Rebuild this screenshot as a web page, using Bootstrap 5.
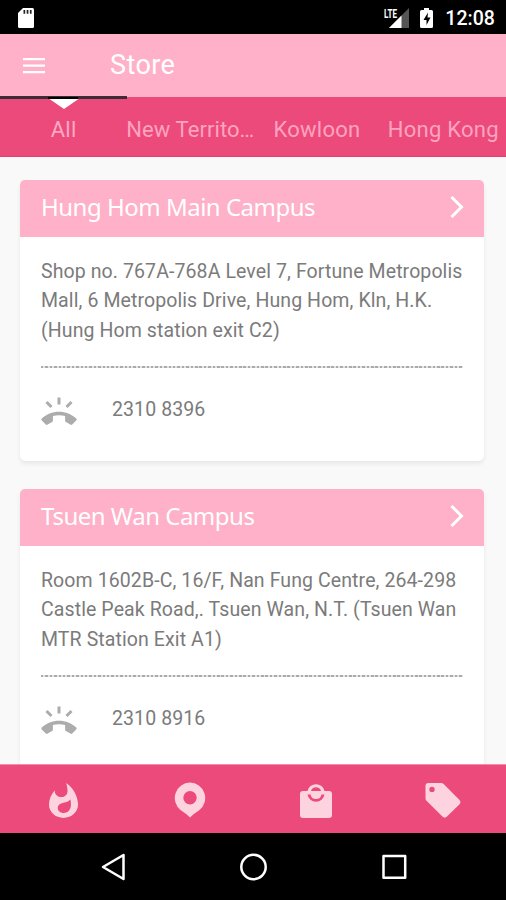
<!DOCTYPE html>
<html lang="en">
<head>
<meta charset="utf-8">
<meta name="viewport" content="width=device-width, initial-scale=1">
<title>Store</title>
<link rel="stylesheet" href="https://cdn.jsdelivr.net/npm/bootstrap@5.3.0/dist/css/bootstrap.min.css">
<style>
  :root { --rose: #ec4a7b; --blush: #feb1c9; --petal: #fed3e0; }
  body { font-family: Roboto, "Liberation Sans", sans-serif; background: #f9f9f9; }
  .phone { width: 506px; height: 900px; }
  svg { display: block; flex: none; }
  .status-bar { height: 34px; background: #000; padding: 2px 11px 0 17px; }
  .clock { font-size: 19.5px; font-weight: 500; letter-spacing: .05px; line-height: 28px; padding-top: 2px; }
  .app-bar { height: 63px; background: var(--blush); padding: 0 23px; }
  .app-title { font-size: 27px; line-height: 32px; margin-left: 65px; padding-bottom: 2px; letter-spacing: .4px; }
  .tab-strip { height: 60px; background: var(--rose); border-bottom: 1px solid #e23e70; }
  .tab-strip .nav-link { width: 127px; height: 60px; padding: 5px 0 0 1px; color: #fda3c0; font-size: 22px; letter-spacing: .25px; }
  .tab-strip .nav-link.active { color: #fda9c4; }
  .tab-strip .nav-link.long-label { letter-spacing: .08px; }
  .indicator { left: 0; top: -1px; width: 127px; height: 13px; }
  .stores { padding: 23px 22px 0 20px; min-height: 0; }
  .store { border-radius: 6px; box-shadow: 0 3px 4px rgba(0,0,0,.07); height: 281px; margin-bottom: 28px; flex: none; }
  .store-head { height: 57px; background: var(--blush); border-radius: 5px 5px 0 0; padding: 0 20px 3px 21px; }
  .store-name { font: 400 24px/30px "Noto Sans", sans-serif; letter-spacing: -.5px; }
  .address { font-size: 19.5px; line-height: 29.4px; letter-spacing: .1px; color: #7b7b7b; padding-top: 20px; height: 129px; }
  .store-body { padding: 0 21px; }
  .dots { height: 2px; background: repeating-linear-gradient(90deg, #aaa 0 2.5px, #e4e4e4 2.5px 4.4px); }
  .call { height: 83px; gap: 35px; font-size: 19.5px; letter-spacing: .1px; color: #7b7b7b; }
  .call svg { margin-top: 5px; }
  .bottom-tabs { height: 69px; background: var(--rose); border-top: 1px solid #f38dac; color: var(--petal); }
  .bottom-tabs .nav-link { color: inherit; }
  .bottom-tabs svg { margin-top: 2px; }
  .sys-nav { height: 67px; background: #000; }
</style>
</head>
<body>
<div class="phone d-flex flex-column overflow-hidden">
  <div class="status-bar d-flex flex-shrink-0 align-items-center justify-content-between text-white">
    <svg width="18" height="22" viewBox="0 0 18 22"><path fill="#fff" d="M6 1h9.500q1.500 0 1.500 1.500v17q0 1.500-1.500 1.500H2.500Q1 21 1 19.500V6z"/><path fill="#222" d="M6.500 3h1.700v3.700H6.500zM9.700 3h1.700v3.700H9.700zM12.900 3h1.700v3.700h-1.700z"/></svg>
    <div class="d-flex align-items-center">
      <svg width="27" height="24" viewBox="0 0 27 24" class="me-2"><path fill="#555" d="M26 2v20H6z"/><path fill="#fff" d="M18.500 9.500V22H6z"/><text x="1" y="11.500" fill="#fff" font-family="Roboto, sans-serif" font-size="12.500" font-weight="700" textLength="13" lengthAdjust="spacingAndGlyphs" stroke="#000" stroke-width="2" paint-order="stroke">LTE</text></svg>
      <svg width="19" height="22" viewBox="0 0 19 22" class="me-2"><path fill="#fff" d="M6 3V1h5v2h2.500q1.500 0 1.500 1.500v15q0 1.500-1.500 1.500h-10Q2 21 2 19.500v-15Q2 3 3.500 3z"/><path fill="#000" d="M10 5.500 5.500 13h3v5l4-7.500h-3z"/></svg>
      <span class="clock">12:08</span>
    </div>
  </div>

  <header class="app-bar d-flex flex-shrink-0 align-items-center text-white">
    <svg width="22" height="17" viewBox="0 0 22 17"><path stroke="#fff" stroke-width="2.300" d="M0 2.200h22M0 8.700h22M0 15.200h22"/></svg>
    <span class="app-title">Store</span>
  </header>

  <nav class="tab-strip nav flex-nowrap flex-shrink-0 position-relative text-nowrap">
    <svg class="indicator position-absolute" viewBox="0 0 127 13"><path fill="#3b2d38" d="M0 0h127v3H0z"/><path fill="#000" d="M48 1h30v2H48z"/><path fill="#fff" d="M49.500 3h29L64 13z"/></svg>
    <a class="nav-link active d-flex align-items-center justify-content-center" href="#">All</a>
    <a class="nav-link long-label d-flex align-items-center justify-content-center" href="#">New Territo…</a>
    <a class="nav-link d-flex align-items-center justify-content-center" href="#">Kowloon</a>
    <a class="nav-link d-flex align-items-center justify-content-center" href="#">Hong Kong</a>
  </nav>

  <main class="stores flex-grow-1 d-flex flex-column overflow-hidden">
    <article class="store bg-white">
      <div class="store-head d-flex align-items-center justify-content-between text-white">
        <span class="store-name">Hung Hom Main Campus</span>
        <svg width="14" height="23" viewBox="0 0 14 23"><path fill="none" stroke="#fff" stroke-width="3" d="m1.500 1 10 10-10 10"/></svg>
      </div>
      <div class="store-body">
        <div class="address text-nowrap">Shop no. 767A-768A Level 7, Fortune Metropolis<br>Mall, 6 Metropolis Drive, Hung Hom, Kln, H.K.<br>(Hung Hom station exit C2)</div>
        <div class="dots"></div>
        <div class="call d-flex align-items-center">
          <svg width="36" height="30" viewBox="0 0 36 30"><use href="#ring"/></svg>
          <span>2310 8396</span>
        </div>
      </div>
    </article>
    <article class="store bg-white">
      <div class="store-head d-flex align-items-center justify-content-between text-white">
        <span class="store-name">Tsuen Wan Campus</span>
        <svg width="14" height="23" viewBox="0 0 14 23"><path fill="none" stroke="#fff" stroke-width="3" d="m1.500 1 10 10-10 10"/></svg>
      </div>
      <div class="store-body">
        <div class="address text-nowrap">Room 1602B-C, 16/F, Nan Fung Centre, 264-298<br>Castle Peak Road,. Tsuen Wan, N.T. (Tsuen Wan<br>MTR Station Exit A1)</div>
        <div class="dots"></div>
        <div class="call d-flex align-items-center">
          <svg width="36" height="30" viewBox="0 0 36 30"><use href="#ring"/></svg>
          <span>2310 8916</span>
        </div>
      </div>
    </article>
  </main>

  <nav class="bottom-tabs nav nav-fill flex-nowrap flex-shrink-0">
    <a class="nav-link d-flex p-0 align-items-center justify-content-center w-25" href="#" aria-label="Hot">
      <svg width="29" height="35" viewBox="4 .67 16 21.330" preserveAspectRatio="none"><path fill="currentColor" fill-rule="evenodd" d="M13.500.67s.74 2.650.74 4.800c0 2.060-1.350 3.730-3.410 3.730-2.070 0-3.630-1.670-3.630-3.730l.03-.36C5.210 7.510 4 10.620 4 14c0 4.420 3.580 8 8 8s8-3.580 8-8C20 8.610 17.410 3.800 13.500.67zM15.800 10.700c.25 1 .3 2 .3 3.300 0 3-1.700 5-3.900 5-2 0-3.400-1.300-3.400-3.200 0-1.800 1.200-2.700 3.200-3.100 1.500-.3 2.900-.9 3.800-2z"/></svg>
    </a>
    <a class="nav-link d-flex p-0 align-items-center justify-content-center w-25" href="#" aria-label="Stores">
      <svg width="32" height="36" viewBox="0 0 32 36"><path fill="currentColor" fill-rule="evenodd" d="M16 .5A15.500 15.500 0 0 1 25.500 28Q20 31.500 16 35.500 12 31.500 6.500 28A15.500 15.500 0 0 1 16 .5zm0 8.500a6.700 6.700 0 1 0 0 13.400A6.700 6.700 0 0 0 16 9z"/></svg>
    </a>
    <a class="nav-link d-flex p-0 align-items-center justify-content-center w-25" href="#" aria-label="Shop">
      <svg width="32" height="36" viewBox="0 0 32 36"><path fill="currentColor" fill-rule="evenodd" d="M3 9h4.500a8.700 8.700 0 0 1 17 0H29q3 0 3 3v21q0 3-3 3H3q-3 0-3-3V12q0-3 3-3zm8 0h10a5.200 5.200 0 0 0-10 0zm-3.500 3.500a8.600 8.600 0 0 0 17 0H21.500a5.600 5.600 0 0 1-11 0z"/></svg>
    </a>
    <a class="nav-link d-flex p-0 align-items-center justify-content-center w-25" href="#" aria-label="Offers">
      <svg width="36" height="36" viewBox="0 0 36 36"><path fill="currentColor" fill-rule="evenodd" d="M3.500 1H16q1.500 0 2.600 1l15.700 15.700q2.400 2.400 0 4.800L22 34.500q-2.300 2.300-4.600 0L1.500 18.800Q.5 17.700.5 16.200V4q0-3 3-3zM7 4.700a2.700 2.700 0 1 0 0 5.400 2.700 2.700 0 0 0 0-5.400z"/></svg>
    </a>
  </nav>

  <div class="sys-nav d-flex align-items-center justify-content-center flex-shrink-0">
    <svg width="506" height="30" viewBox="0 0 506 30" fill="none" stroke="#fff" stroke-width="2.500" stroke-linejoin="round"><path d="M123.500 3v24L103 15z"/><circle cx="253.500" cy="15" r="12.200"/><path d="M383.500 4h21.700v21.700h-21.700z"/></svg>
  </div>
</div>

<svg width="0" height="0" class="position-absolute" aria-hidden="true">
  <defs>
    <g id="ring">
      <path fill="#acacac" d="M18 14.700c6.500 0 12.700 2.600 17.200 6.800q1 1 0 2l-4 4q-.9.800-1.900.1c-1.400-1-2.900-1.900-4.400-2.600q-.8-.4-.8-1.300v-4.600c-4-1.200-8.200-1.200-12.200 0v4.600q0 .9-.8 1.300c-1.500.7-3 1.600-4.400 2.600q-1 .7-1.900-.1l-4-4q-1-1 0-2C5.300 17.300 11.500 14.700 18 14.700z"/>
      <path stroke="#acacac" stroke-width="3" d="M18 .5v7M5.500 5l5 5M30.500 5l-5 5"/>
    </g>
  </defs>
</svg>
<script src="https://cdn.jsdelivr.net/npm/bootstrap@5.3.0/dist/js/bootstrap.bundle.min.js"></script>
</body>
</html>
